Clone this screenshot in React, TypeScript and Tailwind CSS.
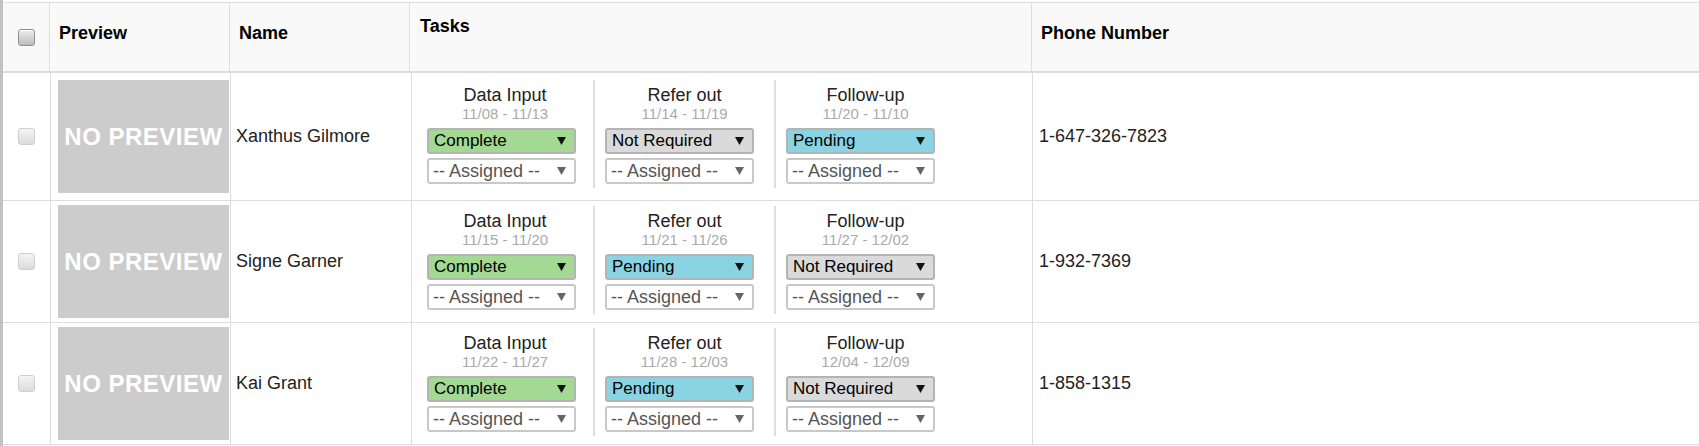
import React from "react";

type Status = "Complete" | "Pending" | "Not Required";

interface Task {
  title: string;
  dates: string;
  status: Status;
}

interface Row {
  name: string;
  phone: string;
  tasks: Task[];
}

const rows: Row[] = [
  {
    name: "Xanthus Gilmore",
    phone: "1-647-326-7823",
    tasks: [
      { title: "Data Input", dates: "11/08 - 11/13", status: "Complete" },
      { title: "Refer out", dates: "11/14 - 11/19", status: "Not Required" },
      { title: "Follow-up", dates: "11/20 - 11/10", status: "Pending" },
    ],
  },
  {
    name: "Signe Garner",
    phone: "1-932-7369",
    tasks: [
      { title: "Data Input", dates: "11/15 - 11/20", status: "Complete" },
      { title: "Refer out", dates: "11/21 - 11/26", status: "Pending" },
      { title: "Follow-up", dates: "11/27 - 12/02", status: "Not Required" },
    ],
  },
  {
    name: "Kai Grant",
    phone: "1-858-1315",
    tasks: [
      { title: "Data Input", dates: "11/22 - 11/27", status: "Complete" },
      { title: "Refer out", dates: "11/28 - 12/03", status: "Pending" },
      { title: "Follow-up", dates: "12/04 - 12/09", status: "Not Required" },
    ],
  },
];

const statusColor: Record<Status, string> = {
  Complete: "bg-[#a3d993]",
  Pending: "bg-[#8ad3e3]",
  "Not Required": "bg-[#dadada]",
};

function Arrow({ color }: { color: string }) {
  return (
    <svg width="9" height="8" viewBox="0 0 9 8" className="shrink-0">
      <polygon points="0,0 9,0 4.5,8" fill={color} />
    </svg>
  );
}

function Checkbox({ header }: { header?: boolean }) {
  return header ? (
    <div className="size-[17px] rounded-[3px] border border-[#8f8f8f] bg-linear-to-b from-[#eeeeee] to-[#bdbdbd] shadow-[inset_0_1px_0_#fff]" />
  ) : (
    <div className="size-[17px] rounded-[3px] border border-[#cfcfcf] bg-linear-to-b from-[#f4f4f4] to-[#dcdcdc]" />
  );
}

function TaskGroup({ task, first }: { task: Task; first: boolean }) {
  return (
    <div
      className={
        first
          ? "w-[176px] pt-[4px] pb-[4px] text-center"
          : "w-[181px] border-l-2 border-[#dedede] pt-[4px] pb-[4px] text-center"
      }
    >
      <div className="text-[18px] leading-[22px] text-[#222]">{task.title}</div>
      <div className="text-[15px] leading-[16px] text-[#aaa]">{task.dates}</div>
      <div className="pl-[10px]">
        <div
          className={`mt-[6px] flex h-[26px] w-[149px] items-center justify-between rounded-[3px] border-2 border-[#b4b4b4] pl-[5px] pr-[8px] text-[17px] text-black ${statusColor[task.status]}`}
        >
          <span>{task.status}</span>
          <Arrow color="#111" />
        </div>
        <div className="mt-[4px] flex h-[26px] w-[149px] items-center justify-between rounded-[3px] border-2 border-[#c8c8c8] bg-white pl-[4px] pr-[8px] text-[18px] text-[#555]">
          <span>-- Assigned --</span>
          <Arrow color="#666" />
        </div>
      </div>
    </div>
  );
}

export default function App() {
  return (
    <div className="flex min-h-[446px] bg-white font-['Liberation_Sans',Arial,sans-serif] text-[#222]">
      <div className="w-[3px] shrink-0 bg-[#c2c2c2]" />
      <div className="flex-1 pt-[2px]">
        {/* Header */}
        <div className="flex h-[71px] border-t border-b-2 border-[#ddd] bg-[#f9f9f9] text-[18px] font-bold leading-[21px] text-black">
          <div className="flex w-[47px] shrink-0 items-center justify-center border-r border-[#ddd] pl-[1px]">
            <Checkbox header />
          </div>
          <div className="w-[180px] shrink-0 border-r border-[#ddd] pl-[9px] pt-[20px]">Preview</div>
          <div className="w-[180px] shrink-0 border-r border-[#ddd] pl-[9px] pt-[20px]">Name</div>
          <div className="w-[622px] shrink-0 border-r border-[#ddd] pl-[10px] pt-[13px]">Tasks</div>
          <div className="flex-1 pl-[9px] pt-[20px]">Phone Number</div>
        </div>

        {/* Rows */}
        {rows.map((row, i) => (
          <div
            key={row.name}
            className={`flex border-b border-[#ddd] ${i === 0 ? "h-[128px]" : "h-[122px]"}`}
          >
            <div className="flex w-[48px] shrink-0 items-center justify-center border-r border-[#ddd] pr-[1px]">
              <Checkbox />
            </div>
            <div className="flex w-[180px] shrink-0 items-center border-r border-[#ddd] pl-[7px]">
              <div className="flex h-[113px] w-[171px] items-center justify-center bg-[#cccccc] text-[24px] font-bold tracking-[0.5px] text-white">
                NO PREVIEW
              </div>
            </div>
            <div className="flex w-[181px] shrink-0 items-center border-r border-[#ddd] pl-[5px] text-[18px]">
              {row.name}
            </div>
            <div
              className={`flex w-[621px] shrink-0 items-start border-r border-[#ddd] pl-[5px] ${i === 0 ? "pt-[7px]" : "pt-[5px]"}`}
            >
              {row.tasks.map((t, j) => (
                <TaskGroup key={t.title} task={t} first={j === 0} />
              ))}
            </div>
            <div className="flex flex-1 items-center pl-[6px] text-[18px]">{row.phone}</div>
          </div>
        ))}
      </div>
    </div>
  );
}
